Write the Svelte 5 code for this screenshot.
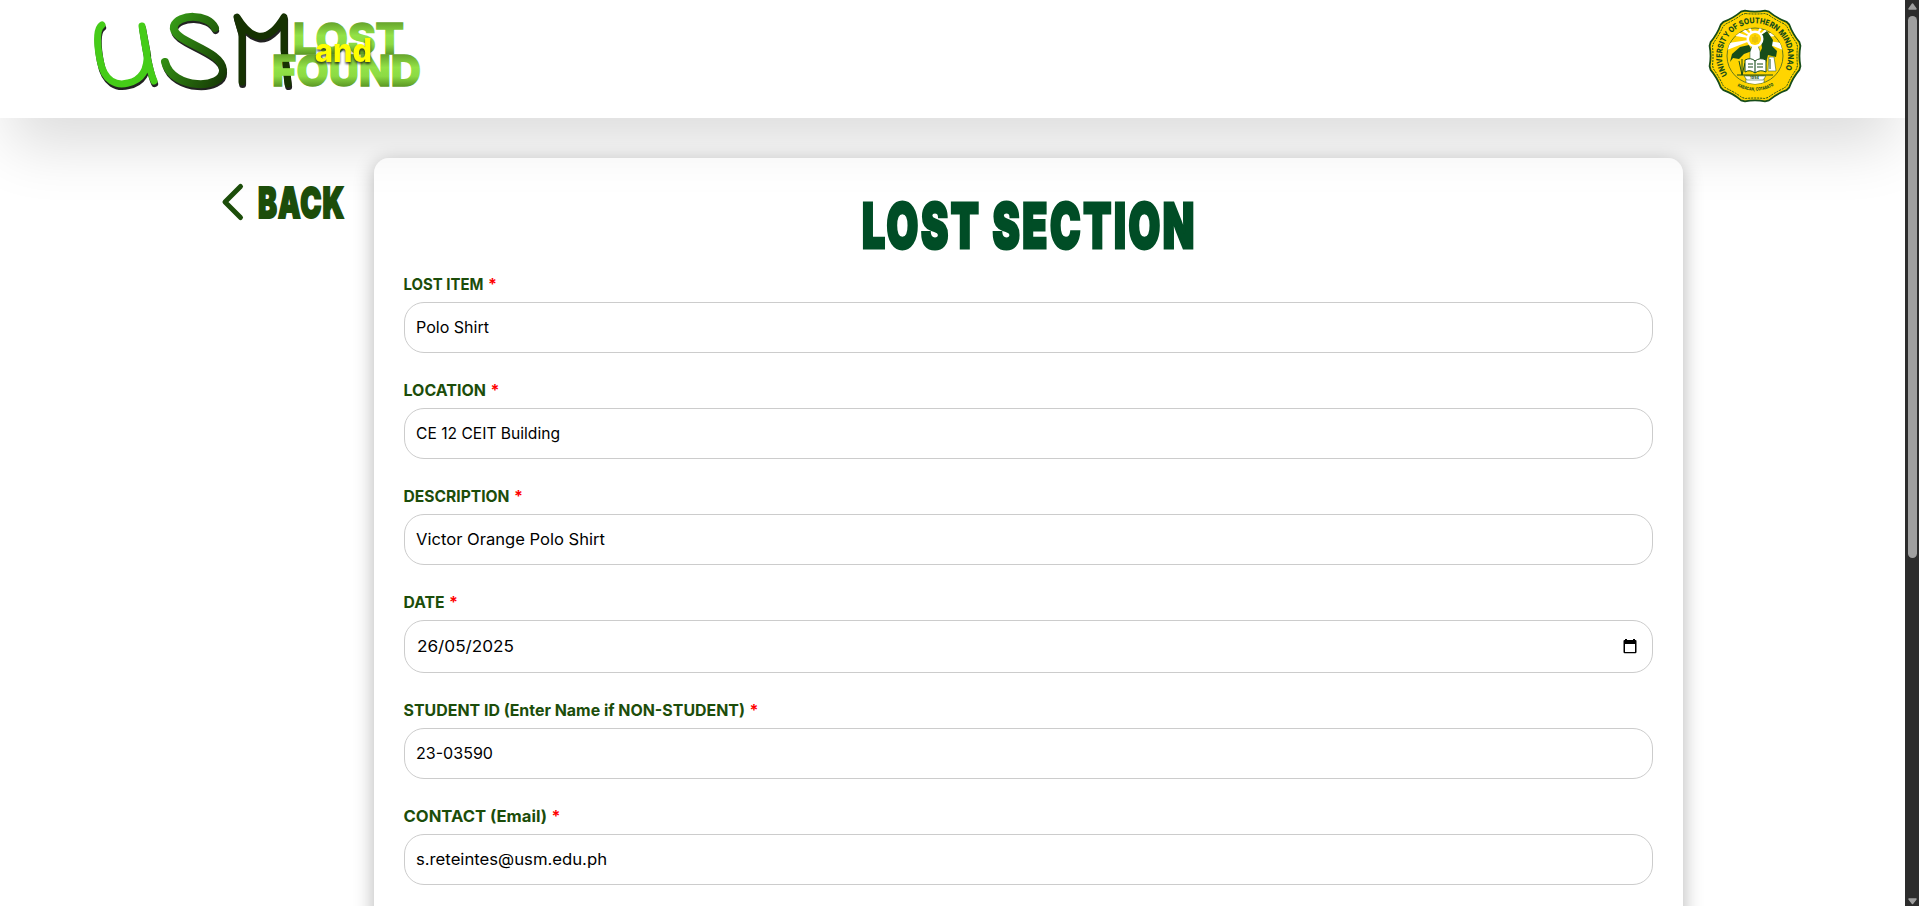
<script>
  const fields = [
    { label: 'LOST ITEM', lw: 80, value: 'Polo Shirt', vw: 73 },
    { label: 'LOCATION', lw: 82.5, value: 'CE 12 CEIT Building', vw: 144 },
    { label: 'DESCRIPTION', lw: 106, value: 'Victor Orange Polo Shirt', vw: 189 },
    { label: 'DATE', lw: 41, value: '26/05/2025', vw: 97, date: true },
    { label: 'STUDENT ID (Enter Name if NON-STUDENT)', lw: 341.5, value: '23-03590', vw: 77 },
    { label: 'CONTACT (Email)', lw: 143.5, value: 's.reteintes@usm.edu.ph', vw: 191 },
  ];
  const point = (a, r) => `${(47 + r * Math.sin(a)).toFixed(1)} ${(47 - r * Math.cos(a)).toFixed(1)}`;
  const scallop = (r, dip) => Array.from({ length: 12 }, (_, i) => {
    const a = (i * Math.PI) / 6;
    return `${i ? 'L' : 'M'}${point(a - 0.22, r)} Q${point(a, r - dip)} ${point(a + 0.22, r)}`;
  }).join(' ') + 'Z';
  const rays = [-75, -52, -28, 28, 52, 75, 105, -105];
</script>

<div class="page">
  <main>
    <header>
      <svg class="logo" width="345" height="92" viewBox="80 0 345 92">
        <defs>
          <linearGradient id="ink" gradientUnits="userSpaceOnUse" x1="165" y1="20" x2="235" y2="55">
            <stop offset="0" stop-color="#39a318" /><stop offset="1" stop-color="#173b05" />
          </linearGradient>
          <linearGradient id="leaf" x1="0" y1="0" x2="0" y2="1">
            <stop offset="0.2" stop-color="#67a52c" /><stop offset="0.45" stop-color="#93e247" />
            <stop offset="0.62" stop-color="#8cdb43" /><stop offset="0.82" stop-color="#5b9824" />
          </linearGradient>
        </defs>
        <g fill="none" stroke-width="7" stroke-linecap="round" stroke-linejoin="round">
          <g stroke="#222" transform="translate(0.6 2.6)">
            <path d="M102 25C96 29 97 45 100 60C104 82 117 86 128 83C142 80 148 70 147 53L142 26C145 45 148 68 154 81" />
            <path d="M215 28C208 13 178 14 174 26C170 42 222 49 223 70C224 90 172 90 165 62" />
            <path d="M242 82V34L237 17C250 38 266 47 284 17V50L288 84" />
          </g>
          <path stroke="#45cc18" d="M102 25C96 29 97 45 100 60C104 82 117 86 128 83C142 80 148 70 147 53L142 26C145 45 148 68 154 81" />
          <path stroke="url(#ink)" stroke-width="8" d="M215 28C208 13 178 14 174 26C170 42 222 49 223 70C224 90 172 90 165 62" />
          <path stroke="#163202" d="M242 82V34L237 17C250 38 266 47 284 17V50L288 84" />
        </g>
        <g font-family="Inter" font-weight="800">
          <text x="293" y="54" font-size="43" textLength="111" lengthAdjust="spacingAndGlyphs" fill="url(#leaf)" stroke="url(#leaf)" stroke-width="1.500">LOST</text>
          <text x="272" y="86" font-size="43" textLength="149" lengthAdjust="spacingAndGlyphs" fill="url(#leaf)" stroke="url(#leaf)" stroke-width="1.500">FOUND</text>
          <text class="and" x="315" y="62" font-size="32" textLength="57" lengthAdjust="spacingAndGlyphs" fill="#ff0">and</text>
        </g>
      </svg>

      <svg class="seal" width="94" height="94" viewBox="0 0 94 94">
        <defs>
          <path id="arcTop" d="M19.500 65.500A33 33 0 1 1 74.500 65.500" />
          <path id="arcBottom" d="M25 74.500A37 37 0 0 0 69 74.500" />
          <clipPath id="disc"><circle cx="47" cy="47" r="28" /></clipPath>
        </defs>
        <path d={scallop(46.5, 3)} fill="#ffd500" stroke="#174d19" stroke-width="1.800" />
        <path d={scallop(43.5, 2)} fill="none" stroke="#174d19" stroke-width="1" stroke-dasharray="2 1" />
        <circle cx="47" cy="47" r="28" fill="#ffd500" stroke="#3f6223" stroke-width="0.800" />
        <g clip-path="url(#disc)">
          {#each rays as r}
            <path d="M47 30L43 -6H51Z" fill="#fff" transform={`rotate(${r} 47 30)`} />
          {/each}
          <path fill="#174d19" d="M22 53L24 45L32 38L41 36L44 42L36 45L31 50L25 49ZM52 27L59 22L65 31L64 37L69 42L68 48L60 46L58 54L50 48L54 39Z" />
          <path fill="#fff" d="M44 37H50L52 42V56H42V43ZM38 67H56V78H38ZM61 48H66L68 62H60Z" stroke="#174d19" stroke-width="0.500" />
          <path d="M34 50V66M31 52L34 66L37 54M29 66H65M62 50V60" fill="none" stroke="#174d19" />
        </g>
        <circle cx="47" cy="30" r="8.500" fill="#fff" />
        <circle cx="47" cy="30" r="6" fill="#ffd500" />
        <path d="M45 33V28M47 34V26M49 33V28" stroke="#b69a20" stroke-width="0.600" />
        <path d="M37 51Q43 48 47 52Q52 48 58 51V63Q52 60 47 64Q42 60 37 63Z" fill="#fff" stroke="#174d19" />
        <path d="M47 52V64M40 55H45M49 55H55M40 58H45M49 58H55" stroke="#174d19" stroke-width="1.100" />
        <path d="M36 67H58L55 71H39Z" fill="#fff" stroke="#174d19" stroke-width="0.500" />
        <g font-family="Inter" font-weight="800" fill="#174d19">
          <text font-size="8"><textPath href="#arcTop" textLength="136" lengthAdjust="spacingAndGlyphs">UNIVERSITY OF SOUTHERN MINDANAO</textPath></text>
          <text font-size="4.500"><textPath href="#arcBottom" startOffset="5" textLength="38" lengthAdjust="spacingAndGlyphs">KABACAN, COTABATO</textPath></text>
          <text x="42" y="70.300" font-size="3.500" textLength="9">1954</text>
        </g>
      </svg>
    </header>

    <div class="body">
      <a class="back" href="#back">
        <svg width="22" height="36" viewBox="0 0 22 36"><path d="M18.500 2.500L3 18L18.500 33.500" fill="none" stroke="#1c4d0a" stroke-width="5" stroke-linecap="round" stroke-linejoin="round" /></svg>
        <svg class="word" width="86" height="44" viewBox="0 0 86 44"><text x="0" y="37.500" font-size="42" textLength="87" lengthAdjust="spacingAndGlyphs">BACK</text></svg>
      </a>
      <section class="card">
        <h1><svg width="334" height="64" viewBox="0 0 334 64"><text x="0" y="57.500" font-size="62" textLength="335" lengthAdjust="spacingAndGlyphs">LOST SECTION</text></svg></h1>
        {#each fields as f}
          <div class="field">
            <div class="label">
              <svg width={f.lw} height="24"><text x="-0.500" y="17.500" textLength={f.lw} lengthAdjust="spacingAndGlyphs">{f.label}</text></svg>
              <span class="star">*</span>
            </div>
            <div class="input" class:date={f.date}>
              <svg width={f.vw} height="24"><text x="0" y="17" textLength={f.vw} lengthAdjust="spacingAndGlyphs">{f.value}</text></svg>
              {#if f.date}
                <svg class="cal" width="14" height="15" viewBox="0 0 14 15"><path fill="#000" fill-rule="evenodd" d="M2 0H4V1H10V0H12V1H12.500Q13.500 1 13.500 2V13Q13.500 14.300 12.300 14.300H1.700Q.5 14.300.5 13V2Q.5 1 1.500 1H2ZM2 5V13H12V5Z" /></svg>
              {/if}
            </div>
          </div>
        {/each}
      </section>
    </div>
  </main>
  <aside class="scrollbar">
    <svg width="14" height="16" viewBox="0 0 14 16"><path d="M7.500 4L11 9H4Z" fill="#9f9f9f" stroke="#9f9f9f" stroke-width="1.500" stroke-linejoin="round" /></svg>
    <div class="thumb"></div>
    <svg class="down" width="14" height="10" viewBox="0 0 14 10"><path d="M4 3H11L7.500 7.500Z" fill="#9f9f9f" stroke="#9f9f9f" stroke-width="1.500" stroke-linejoin="round" /></svg>
  </aside>
</div>

<style>
  .page { display: flex; width: 1919px; height: 906px; overflow: hidden; background: #fff; font-family: Inter, sans-serif; }
  main { flex: 1; min-width: 0; overflow: hidden; }
  header { display: flex; justify-content: space-between; height: 118px; box-sizing: border-box; padding: 0 103px 0 80px; background: #fff; box-shadow: 0 38px 60px -10px rgba(0, 0, 0, 0.138); }
  header svg { display: block; flex: none; }
  .and { filter: drop-shadow(0 2.500px 1.300px rgba(20, 20, 20, 0.75)); }
  .seal { margin-top: 9px; }
  .body { display: flex; align-items: flex-start; gap: 29px; padding: 40px 0 0 222px; }
  .back { display: flex; gap: 14px; width: 123px; margin-top: 22px; text-decoration: none; align-items: center; }
  .back svg { flex: none; overflow: visible; }
  .back text, h1 text { font-family: Impact, Inter, sans-serif; font-weight: 900; }
  .back text { fill: #1c4d0a; stroke: #1c4d0a; stroke-width: 2px; letter-spacing: 1.500px; }
  h1 text { fill: #004d26; stroke: #004d26; stroke-width: 3px; letter-spacing: 4px; }
  .card { box-sizing: border-box; width: 1309px; height: 1300px; flex: none; padding: 32px 30px; border-radius: 15px; background: rgba(255, 255, 255, 0.5); box-shadow: 0 5px 20px rgba(0, 0, 0, 0.3); }
  h1 { display: flex; justify-content: center; margin: 0; height: 82px; }
  h1 svg { overflow: visible; }
  .field { margin-bottom: 25px; }
  .label { display: flex; height: 24px; gap: 4px; margin-bottom: 6px; line-height: 24px; font-weight: 700; }
  .label svg, .input svg { overflow: visible; flex: none; }
  .label text { font-size: 16px; font-weight: 700; fill: #1c4d0a; }
  .star { color: red; font-size: 16px; }
  .input { display: flex; align-items: center; box-sizing: border-box; height: 51px; padding: 0 11px; border: 1px solid #ccc; border-radius: 20px; background: #fff; }
  .input text { font-size: 16px; fill: #000; }
  .date { height: 53px; padding-right: 15px; padding-left: 12px; }
  .cal { margin-left: auto; }
  .scrollbar { display: flex; flex-direction: column; width: 14px; background: #2c2c2c; }
  .thumb { width: 9px; height: 542px; margin-left: 3px; border-radius: 5px; background: #9f9f9f; }
  .down { margin-top: auto; }
</style>
